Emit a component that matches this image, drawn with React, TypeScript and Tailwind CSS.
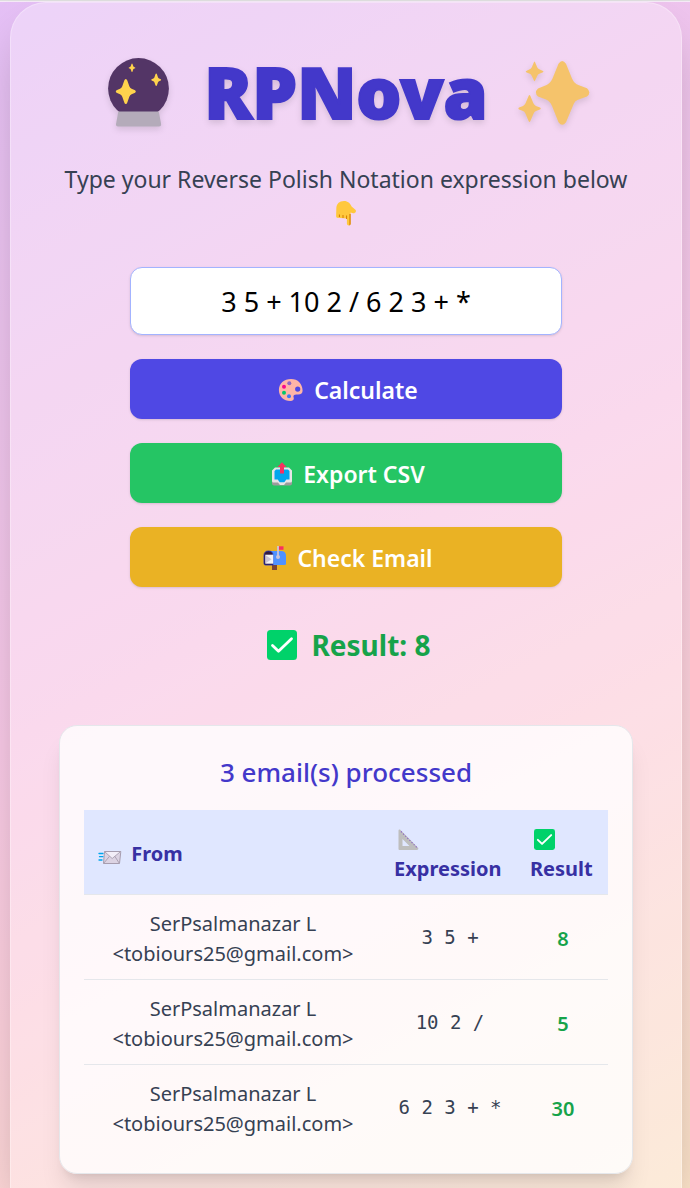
import { useState } from "react";
import type { ReactNode } from "react";

const SPARK = "M0-10Q.8-10 1.2-8.8L2.8-4.2Q3.3-2.8 4.6-2.2L7.4-1Q8.6 0 7.4 1L4.6 2.2Q3.3 2.8 2.8 4.2L1.2 8.8Q.8 10 0 10T-1.2 8.8L-2.8 4.2Q-3.3 2.8-4.6 2.2L-7.4 1Q-8.6 0-7.4-1L-4.6-2.2Q-3.3-2.8-2.8-4.2L-1.2-8.8Q-.8-10 0-10Z";

function CrystalBall() {
  return (
    <svg viewBox="0 0 72 72" className="size-[72px] shrink-0" aria-hidden="true">
      <circle cx="36.5" cy="33.5" r="30.4" fill="#533566" />
      <path d="M16.3 56.5h40.5l2.3 12.6q.3 2.4-2 2.4H16q-2.3 0-2-2.4z" fill="#b4abba" />
      <g fill="#ffd34d">
        <path d={SPARK} transform="translate(23.8 36.5) scale(1.26)" />
        <path d={SPARK} transform="translate(54.2 24.8) scale(.62)" />
        <path d={SPARK} transform="translate(30 12.8) scale(.42)" />
      </g>
    </svg>
  );
}

function Sparkles() {
  return (
    <svg viewBox="0 0 72 72" className="size-[72px] shrink-0" aria-hidden="true">
      <g fill="#f5c36b">
        <path d="M40.5 8.8Q44.2 3.2 48 8.8L54 23.500Q56 28.400 61 30.300L69 33.200Q73.800 37.500 69 41.500L60 44.800Q57 46 55.800 48.800L48 67.200Q44.200 72.200 40.500 67.200L34 51Q32 46 28 44.500L20 41.500Q15.800 37.500 20 33.400L28 30.300Q32 28.800 34.500 23.500Z" />
        <path d="M10.700 40.800Q11.500 39 12.300 40.800L15.400 48.300Q16.200 50.200 18 50.900L22 52.600Q23.500 53.500 22 54.400L18 56Q16.300 56.800 15.500 58.800L12.300 66.200Q11.500 67.800 10.700 66.200L7.500 58.800Q6.700 56.800 5 56L1 54.400Q-.2 53.500 1 52.600L5 50.900Q6.800 50.200 7.500 48.300Z" />
        <path d="M15.900 7.200Q16.500 5.800 17.100 7.200L19.200 12.200Q19.900 13.700 21.300 14.300L25 15.900Q26 16.500 25 17.200L21.300 18.700Q19.900 19.300 19.200 21L17.100 25.600Q16.500 27 15.900 25.600L13.800 21Q13.100 19.300 11.700 18.700L8.200 17.200Q7.200 16.500 8.200 15.900L11.700 14.300Q13.100 13.700 13.800 12.200Z" />
      </g>
    </svg>
  );
}

function PointDown() {
  return (
    <svg viewBox="0 0 24 26" className="inline-block h-[26px] w-6 align-[-2px]" aria-hidden="true">
      <path d="M2.300 9C2.300 3.900 5.300 1 10 1c4 0 6 2.300 7.600 5.500l3.800 3.300c1.400 1.500-.1 3.900-2.400 3.400l-2.400-.7v11c0 2.500-3.700 2.500-3.700 0v-5l-10-.8q-.9-.5-.8-2z" fill="#ffc83d" />
      <path d="M5.400 14.500v2.500M9 15v3M12.600 15.500v3.500" stroke="#d67d00" strokeWidth="1" fill="none" />
      <path d="M16.600 14v10q-.2 1.300-1.200 1.500V14z" fill="#d67d00" />
    </svg>
  );
}

function Palette() {
  return (
    <svg viewBox="0 0 26 24" className="h-6 w-[26px]" aria-hidden="true">
      <path fillRule="evenodd" d="M13 .9C6 .9.9 5.500.9 12c0 6.500 4.800 11 11.500 11 2.400 0 4-1.200 3.300-3.200-.9-2.500.5-3.500 3-3.400 4 .4 6-.8 5.900-4C24.400 5.700 20 .9 13 .9ZM19.700 8.500a2.600 2.600 0 1 1 0 5.200 2.600 2.600 0 0 1 0-5.200Z" fill="#ffb5a7" />
      <circle cx="11.300" cy="5.300" r="2" fill="#8d65c5" />
      <circle cx="6" cy="8.700" r="2" fill="#f70a8d" />
      <circle cx="6" cy="14.700" r="2" fill="#00c96b" />
      <circle cx="11" cy="18.200" r="2" fill="#3f77f4" />
    </svg>
  );
}

function Outbox() {
  return (
    <svg viewBox="0 0 22 24" className="h-6 w-[22px]" aria-hidden="true">
      <path d="M1 17h20v4.500q0 2-2 2H3q-2 0-2-2Z" fill="#9b9b9b" />
      <path d="M4 5.500h14l3 3V19q0 1.500-1.500 1.500H15L13 23H9l-2-2.500H2.500Q1 20.500 1 19V8.500Z" fill="#e6e6e6" />
      <path d="M5 7.500h12l1.500 1.500v8.500h-3.200l-2 2.700H8.700l-2-2.700H3.500V9Z" fill="#00a6ed" />
      <path d="M11 .3 15.500 5H13v6.500H9V5H6.500Z" fill="#f92f60" />
    </svg>
  );
}

function Mailbox() {
  return (
    <svg viewBox="0 0 24 26" className="h-[26px] w-6" aria-hidden="true">
      <path d="M9 19h5v6H9Z" fill="#7d4533" />
      <path d="M5 6h13q5 0 5 5v7.500q0 1.500-1.500 1.500H5Z" fill="#5092ff" />
      <path d="M1 10.500Q1 6 5.500 6T10 10.500V20H2.500Q1 20 1 18.500Z" fill="#321b41" stroke="#212fbf" strokeWidth=".8" />
      <path d="M2.300 9.700h8v9h-8Z" fill="#f4f4f4" />
      <path d="m3 10.500 5.500 3.700L3 18" fill="#cdc4d6" />
      <path d="M15 1v11" stroke="#cdc4d6" strokeWidth="1.800" />
      <circle cx="15" cy="12" r="2" fill="#cdc4d6" />
      <path d="M16 1.300h4.500v3.500H16Z" fill="#f92f60" />
    </svg>
  );
}

function CheckBadge({ className }: { className: string }) {
  return (
    <svg viewBox="0 0 30 30" className={className} aria-hidden="true">
      <rect width="30" height="30" rx="3.500" fill="#00d26a" />
      <path d="m5.500 15.500 6 5.800L24.500 8.700" fill="none" stroke="#fff" strokeWidth="2.800" strokeLinecap="round" strokeLinejoin="round" />
    </svg>
  );
}

function FlyingMail() {
  return (
    <svg viewBox="0 0 24 15" className="mr-1 inline-block h-[15px] w-6 align-[-4px]" aria-hidden="true">
      <path d="M1 3.500h4M1.500 6.700H5M1 10h3" stroke="#00a6ed" strokeWidth="1.300" strokeLinecap="round" />
      <path d="M6.500 1.500h16.300L21.500 13.500H5.500Z" fill="#dcd3e3" stroke="#a79daf" strokeWidth="1" strokeLinejoin="round" />
      <path d="m6.800 2 7.400 6.500L22.500 2Z" fill="#f3eef8" />
      <path d="m6.500 1.500 7.700 7 8.500-7M5.700 13.300l5.800-7M21.300 13.300l-4.500-7" fill="none" stroke="#a79daf" strokeWidth=".9" />
    </svg>
  );
}

function SetSquare() {
  return (
    <svg viewBox="0 0 21 21" className="size-[21px]" aria-hidden="true">
      <path fillRule="evenodd" d="M.5 1.500Q.5.200 2 .5L20.300 19q.5 1.700-1.200 2H1.500Q.5 21 .5 20ZM4.500 10v7h7Z" fill="#bebebe" />
      <path d="m3 2.500 16.500 16.700" stroke="#8d65c5" strokeWidth="1.100" strokeDasharray="1.300 1.700" />
    </svg>
  );
}

function ActionButton({ color, icon, children }: { color: string; icon: ReactNode; children: ReactNode }) {
  return (
    <button
      type="button"
      className={`flex h-[60px] w-full items-center justify-center gap-2.5 rounded-xl pt-0.5 pl-1 text-[23px] font-semibold text-white shadow ${color}`}
    >
      {icon}
      {children}
    </button>
  );
}

const emails = [
  { expression: "3 5 +", result: 8 },
  { expression: "10 2 /", result: 5 },
  { expression: "6 2 3 + *", result: 30 },
];

export default function App() {
  const [expression, setExpression] = useState("3 5 + 10 2 / 6 2 3 + *");

  return (
    <div className="min-h-screen border-t border-[#dfdfdf] bg-[linear-gradient(152deg,#e5c0f6_0%,#f8c9e6_48%,#fcd0dc_66%,#fbe2c8_100%)] pl-0.5 font-['Noto_Sans','Open_Sans',sans-serif] text-gray-700">
      <div className="-ml-0.5 h-px bg-[#f6eaf8]" />
      <main className="mx-auto max-w-2xl rounded-t-[36px] border border-b-0 border-white/30 bg-white/30 px-12 pt-12 pb-3.5 shadow-2xl">
        <h1 className="flex h-20 items-center justify-center gap-[30px] text-[71px] leading-none font-black text-[#4338ca] drop-shadow-md [-webkit-text-stroke:2px_#4338ca]">
          <CrystalBall />
          RPNova
          <Sparkles />
        </h1>
        <p className="mt-[30px] text-center text-[23px] leading-9">
          Type your Reverse Polish Notation expression below <PointDown />
        </p>

        <form className="mx-auto mt-[34px] flex max-w-[432px] flex-col gap-6" onSubmit={(e) => e.preventDefault()}>
          <input
            aria-label="RPN expression"
            value={expression}
            onChange={(e) => setExpression(e.target.value)}
            className="h-[68px] w-full rounded-xl border border-indigo-300 bg-white px-6 text-center text-[27px] text-black shadow-sm outline-none"
          />
          <ActionButton color="bg-[#4f48e4]" icon={<Palette />}>Calculate</ActionButton>
          <ActionButton color="bg-[#25c564]" icon={<Outbox />}>Export CSV</ActionButton>
          <ActionButton color="bg-[#eab224]" icon={<Mailbox />}>Check Email</ActionButton>
        </form>

        <p className="mt-10 flex items-center justify-center gap-3.5 pl-1.5 text-[28px] leading-9 font-bold text-[#16a34a]">
          <CheckBadge className="size-[30px]" />
          Result: 8
        </p>

        <section className="mt-[62px] rounded-[18px] border border-gray-200 bg-white/80 px-6 pt-7 pb-6 shadow-xl">
          <h2 className="text-center text-[26px] leading-9 font-medium text-[#4338ca]">3 email(s) processed</h2>
          <table className="mt-5 w-full table-fixed border-collapse text-[20px] leading-[30px]">
            <colgroup>
              <col />
              <col className="w-[136px]" />
              <col className="w-[90px]" />
            </colgroup>
            <thead className="bg-indigo-100 text-left text-[#3730a3]">
              <tr className="border-b border-gray-200">
                <th className="px-3.5 pt-3.5 pb-2.5 font-bold"><FlyingMail /> From</th>
                <th className="px-3 pt-3.5 pb-2.5 font-bold">
                  <span className="flex h-[30px] items-center pl-1"><SetSquare /></span>
                  Expression
                </th>
                <th className="px-3 pt-3.5 pb-2.5 font-bold">
                  <span className="flex h-[30px] items-center pl-1"><CheckBadge className="size-[21px]" /></span>
                  Result
                </th>
              </tr>
            </thead>
            <tbody className="text-center">
              {emails.map((mail) => (
                <tr key={mail.expression} className="border-b border-gray-200 last:border-b-0">
                  <td className="px-3 pt-3.5 pb-2.5">
                    SerPsalmanazar L
                    <br />
                    &lt;tobiours25@gmail.com&gt;
                  </td>
                  <td className="px-3 py-3 font-['DejaVu_Sans_Mono',monospace] text-[19px] whitespace-nowrap">{mail.expression}</td>
                  <td className="px-3 pt-3.5 pb-2.5 font-semibold text-[#16a34a]">{mail.result}</td>
                </tr>
              ))}
            </tbody>
          </table>
        </section>
      </main>
    </div>
  );
}
